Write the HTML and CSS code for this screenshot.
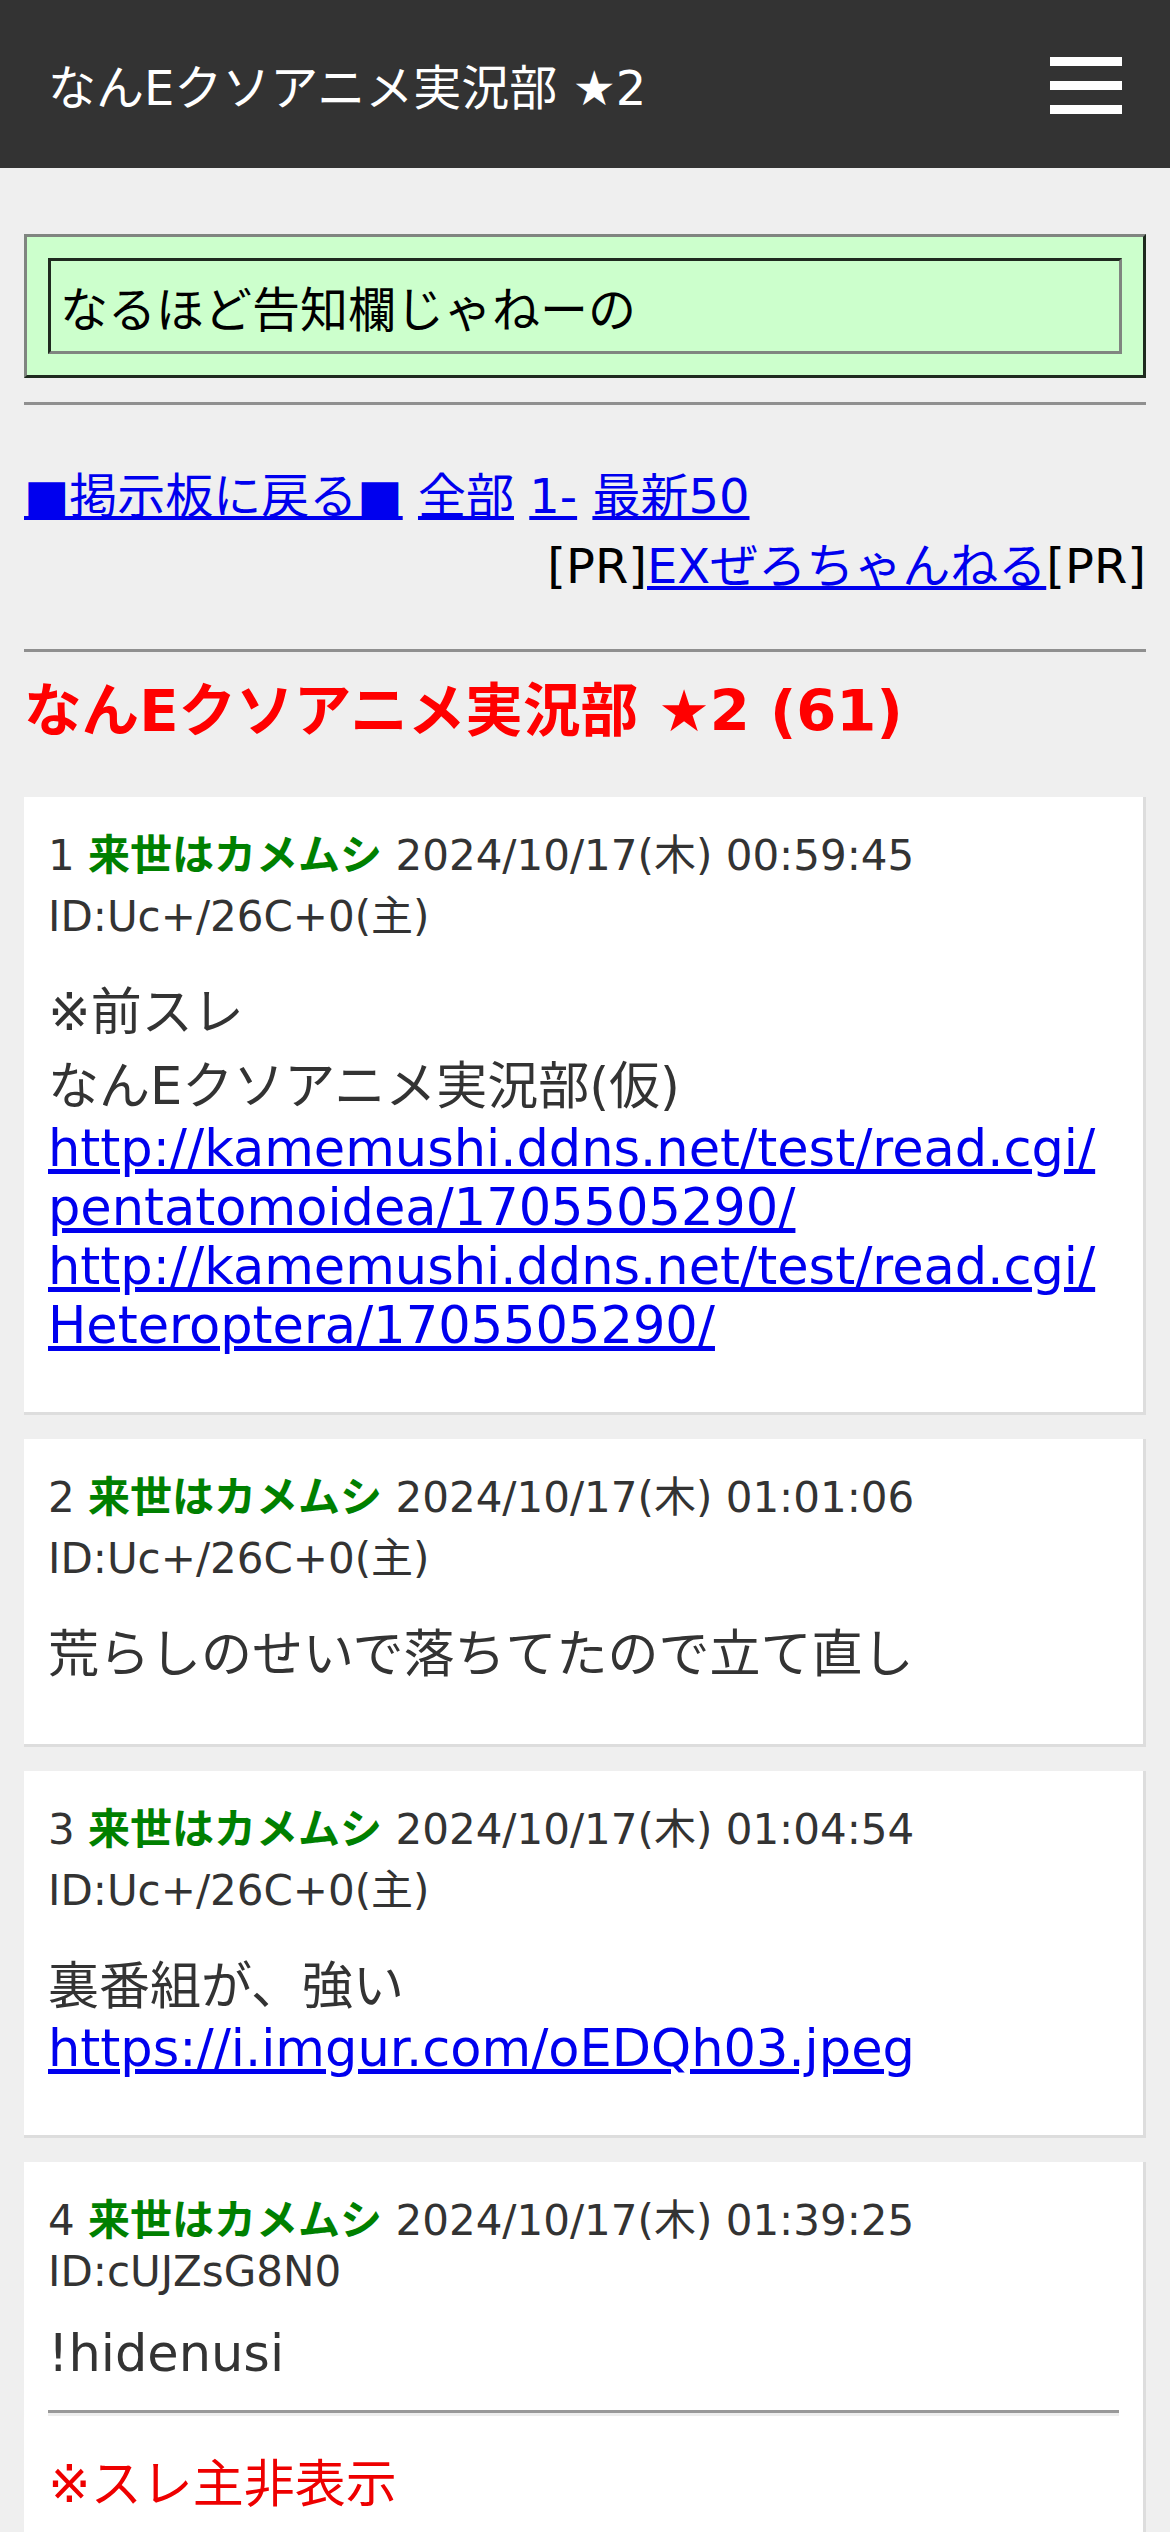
FILE: index.html
```html
<!DOCTYPE html>
<html lang="ja">
<head>
  <meta charset="UTF-8" />
  <meta name="viewport" content="width=device-width, initial-scale=1.0"/>
  <title>なんEクソアニメ実況部 ★2</title>
  <link rel="stylesheet" href="styles.css">
</head>
<body>
  <header class="topbar">
    <div class="topbar-title">なんEクソアニメ実況部 ★2</div>
    <div class="menu-btn"><span></span><span></span><span></span></div>
  </header>

  <main class="content">
    <div class="notice">
      <div class="notice-cell">なるほど告知欄じゃねーの</div>
    </div>
    <hr class="rule">

    <div class="nav">
      <div class="nav-links"><a href="#">■掲示板に戻る■</a> <a href="#">全部</a> <a href="#">1-</a> <a href="#">最新50</a></div>
      <div class="nav-pr">[PR]<a href="#">EXぜろちゃんねる</a>[PR]</div>
    </div>
    <hr class="rule">

    <h1 class="thread-title">なんEクソアニメ実況部 ★2 (61)</h1>

    <div class="post">
      <div class="post-head">
        <span class="num">1</span> <span class="name">来世はカメムシ</span> <span class="date">2024/10/17(木) 00:59:45</span>
        <div class="uid">ID:Uc+/26C+0(主)</div>
      </div>
      <div class="post-body">
        ※前スレ<br>
        なんEクソアニメ実況部(仮)<br>
        <a href="#">http://kamemushi.ddns.net/test/read.cgi/pentatomoidea/1705505290/</a><br>
        <a href="#">http://kamemushi.ddns.net/test/read.cgi/Heteroptera/1705505290/</a>
      </div>
    </div>

    <div class="post">
      <div class="post-head">
        <span class="num">2</span> <span class="name">来世はカメムシ</span> <span class="date">2024/10/17(木) 01:01:06</span>
        <div class="uid">ID:Uc+/26C+0(主)</div>
      </div>
      <div class="post-body">荒らしのせいで落ちてたので立て直し</div>
    </div>

    <div class="post">
      <div class="post-head">
        <span class="num">3</span> <span class="name">来世はカメムシ</span> <span class="date">2024/10/17(木) 01:04:54</span>
        <div class="uid">ID:Uc+/26C+0(主)</div>
      </div>
      <div class="post-body">
        裏番組が、強い<br>
        <a href="#">https://i.imgur.com/oEDQh03.jpeg</a>
      </div>
    </div>

    <div class="post">
      <div class="post-head">
        <span class="num">4</span> <span class="name">来世はカメムシ</span> <span class="date">2024/10/17(木) 01:39:25</span>
        <div class="uid">ID:cUJZsG8N0</div>
      </div>
      <div class="post-body">
        !hidenusi
        <hr class="rule in-post">
        <span class="hidden-note">※スレ主非表示</span>
      </div>
    </div>
  </main>
</body>
</html>
```

FILE: styles.css
```css
body {
  margin: 0;
  background: #efefef;
  font-family: "DejaVu Sans", "Noto Sans CJK JP", sans-serif;
  font-size: 48px;
  color: #000;
}
a {
  color: #0000ee;
}

.topbar {
  height: 168px;
  background: #333;
  color: #fff;
  display: flex;
  align-items: center;
  justify-content: space-between;
  padding: 0 48px;
}
.topbar-title {
  font-size: 48px;
}
.menu-btn {
  display: flex;
  flex-direction: column;
  gap: 15px;
  width: 72px;
  margin-top: 3px;
}
.menu-btn span {
  height: 9px;
  background: #fff;
}

.content {
  padding: 0 24px;
}

.notice {
  margin: 66px 0 24px;
  background: #ccffcc;
  border: 3px solid;
  border-color: #808580 #1f2a1f #1f2a1f #808580;
  padding: 21px;
}
.notice-cell {
  border: 3px solid;
  border-color: #1f2a1f #808580 #808580 #1f2a1f;
  padding: 10px 9px;
}

.rule {
  height: 0;
  margin: 0;
  border: 0;
  border-top: 3px solid #8f8f8f;
  border-bottom: 3px solid #eeeeee;
}

.nav {
  margin: 49px 0 52px;
}
.nav-pr {
  text-align: right;
}

.thread-title {
  margin: 9px 0 49px;
  font-size: 57.6px;
  font-weight: bold;
  color: #ff0000;
}

.post {
  background: #fff;
  border-right: 3px solid #dddddd;
  border-bottom: 3px solid #dddddd;
  padding: 24px 24px 57px;
  margin-bottom: 24px;
}
.post-head {
  font-size: 42px;
  color: #333;
}
.post-head .name {
  color: #008000;
  font-weight: bold;
}
.post-body {
  margin-top: 28px;
  font-size: 51px;
  color: #333;
  overflow-wrap: break-word;
}
.rule.in-post {
  margin: 27px 0;
  border-top-color: #999;
}
.hidden-note {
  color: #ee0000;
}
```
